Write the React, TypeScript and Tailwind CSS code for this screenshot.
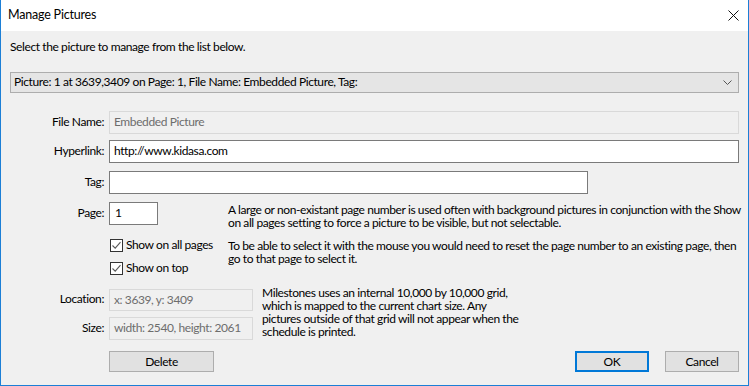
import React from "react";

const font = { fontFamily: 'Lato, "Segoe UI", sans-serif' };

function Check({ label }: { label: string }) {
  return (
    <div className="flex items-center h-[14px] whitespace-nowrap">
      <div className="w-[13px] h-[13px] border border-[#333333] bg-white flex items-center justify-center shrink-0">
        <svg width="11" height="11" viewBox="0 0 11 11">
          <path d="M1.5 5.5 L4.2 8.2 L9.5 2.2" fill="none" stroke="#5a5a5a" strokeWidth="1.1" />
        </svg>
      </div>
      <span className="ml-[3px] leading-[14px]">{label}</span>
    </div>
  );
}

function Btn({ label, primary, width }: { label: string; primary?: boolean; width: string }) {
  return (
    <div
      className={`${width} h-[21px] flex items-center justify-center bg-[#e1e1e1] ${
        primary ? "border-2 border-[#0078d7]" : "border border-[#adadad]"
      }`}
    >
      {label}
    </div>
  );
}

export default function App() {
  return (
    <div
      className="w-[749px] h-[386px] flex flex-col border-x border-b border-[#1c7fd6] text-[12px] tracking-[-0.4px] text-black antialiased overflow-hidden"
      style={font}
    >
      {/* title bar */}
      <div className="h-[31px] bg-white flex items-center justify-between pl-[7px] pr-[9px] shrink-0">
        <span className="text-[12.5px] tracking-[-0.2px] mb-[1px]">Manage Pictures</span>
        <svg width="11" height="11" viewBox="0 0 11 11" className="mb-[1px]">
          <path d="M0.5 0.5 L10.5 10.5 M10.5 0.5 L0.5 10.5" stroke="#111" strokeWidth="1" />
        </svg>
      </div>

      <div className="flex-1 bg-[#f0f0f0] pl-[9px] pr-[9px] pt-[9px] flex flex-col">
        <div className="leading-[14px] mb-[1px]">Select the picture to manage from the list below.</div>

        {/* picture selector */}
        <div className="mt-[17px] h-[21px] bg-[#e5e5e5] border border-[#adadad] flex items-center justify-between pl-[3px] pr-[6px]">
          <span className="mb-[1px]">Picture: 1 at 3639,3409 on Page: 1, File Name: Embedded Picture, Tag:</span>
          <svg width="9" height="6" viewBox="0 0 9 6">
            <path d="M0.5 0.5 L4.5 4.5 L8.5 0.5" fill="none" stroke="#555" strokeWidth="1" />
          </svg>
        </div>

        {/* file name */}
        <div className="mt-[18px] flex items-center">
          <div className="w-[94px] text-right pb-[2px]">File Name:</div>
          <div className="ml-[5px] flex-1 h-[23px] border border-[#d9d9d9] bg-[#f0f0f0] text-[#6d6d6d] flex items-center pl-[4px] pb-[1px]">
            Embedded Picture
          </div>
        </div>

        <div className="mt-[6px] flex items-center">
          <div className="w-[94px] text-right pb-[2px]">Hyperlink:</div>
          <div className="ml-[5px] flex-1 h-[23px] border border-[#7a7a7a] bg-white flex items-center pl-[4px] pb-[1px]">
            http://www.kidasa.com
          </div>
        </div>

        <div className="mt-[8px] flex items-center">
          <div className="w-[94px] text-right pb-[2px]">Tag:</div>
          <div className="ml-[5px] w-[479px] h-[23px] border border-[#7a7a7a] bg-white" />
        </div>

        {/* page + options */}
        <div className="mt-[8px] flex">
          <div className="w-[218px] shrink-0 flex flex-col">
            <div className="flex items-center">
              <div className="w-[94px] text-right pb-[2px]">Page:</div>
              <div className="ml-[5px] w-[49px] h-[23px] border border-[#7a7a7a] bg-white flex items-center pl-[5px] pb-[1px]">
                1
              </div>
            </div>
            <div className="mt-[13px] ml-[100px] flex flex-col gap-[9px]">
              <Check label="Show on all pages" />
              <Check label="Show on top" />
            </div>
          </div>
          <div className="pt-[1px] leading-[13px] whitespace-nowrap">
            <div>
              A large or non-existant page number is used often with background pictures in conjunction with the Show
              <br />
              on all pages setting to force a picture to be visible, but not selectable.
            </div>
            <div className="mt-[10px]">
              To be able to select it with the mouse you would need to reset the page number to an existing page, then
              <br />
              go to that page to select it.
            </div>
          </div>
        </div>

        {/* location / size */}
        <div className="mt-[14px] flex">
          <div className="flex flex-col gap-[6px]">
            <div className="flex items-center">
              <div className="w-[94px] text-right pb-[2px]">Location:</div>
              <div className="ml-[5px] w-[144px] h-[22px] border border-[#d9d9d9] bg-[#f0f0f0] text-[#6d6d6d] flex items-center pl-[4px] pb-[1px] whitespace-nowrap">
                x: 3639, y: 3409
              </div>
            </div>
            <div className="flex items-center">
              <div className="w-[94px] text-right pb-[2px]">Size:</div>
              <div className="ml-[5px] w-[144px] h-[23px] border border-[#d9d9d9] bg-[#f0f0f0] text-[#6d6d6d] flex items-center pl-[4px] pb-[1px] whitespace-nowrap">
                width: 2540, height: 2061
              </div>
            </div>
          </div>
          <div className="ml-[9px] -mt-[3px] leading-[13px] whitespace-nowrap">
            Milestones uses an internal 10,000 by 10,000 grid,
            <br />
            which is mapped to the current chart size. Any
            <br />
            pictures outside of that grid will not appear when the
            <br />
            schedule is printed.
          </div>
        </div>

        {/* buttons */}
        <div className="mt-[11px] flex items-center">
          <div className="ml-[99px]">
            <Btn label="Delete" width="w-[105px]" />
          </div>
          <div className="ml-auto flex gap-[16px]">
            <Btn label="OK" primary width="w-[74px]" />
            <Btn label="Cancel" width="w-[74px]" />
          </div>
        </div>
      </div>
    </div>
  );
}
